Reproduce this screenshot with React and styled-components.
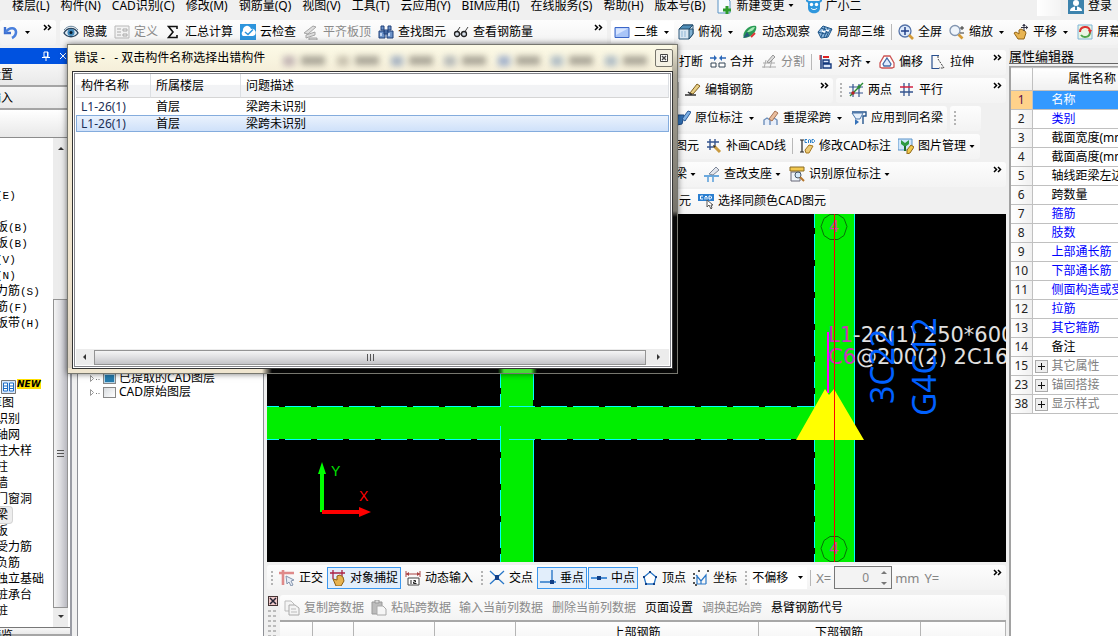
import React from "react";
import styled, { createGlobalStyle, css } from "styled-components";

const Global = createGlobalStyle`
  * { box-sizing: border-box; }
  html, body, #root { height: 100%; margin: 0; }
  body {
    overflow: hidden;
    background: #f0f0f0;
    color: #000;
    font: 12px/16px "Noto Sans", "Noto Sans CJK SC", sans-serif;
  }
  button, input, select { font: inherit; color: inherit; margin: 0; }
`;

/* ---------- icons ---------- */

const svgs = {
  undo: <><path d="M2 3v6h6" fill="none" stroke="#3d6fd0" strokeWidth="2.4" /><path d="M2.500 8.500C6 3 13 3 13 8c0 3-2 5-4 6" fill="none" stroke="#4a80dd" strokeWidth="2.600" /></>,
  eye: <><path d="M1 9c3-6 11-6 14 0-3 5-11 5-14 0z" fill="#dfe9f2" stroke="#2b4660" strokeWidth="1.4" /><circle cx="8" cy="8.500" r="3.500" fill="#3f86b8" /><circle cx="8" cy="8.500" r="1.500" fill="#0a1a28" /><path d="M1 6c4-5 10-5 14 0" fill="none" stroke="#68859c" /></>,
  form: <><path d="M1 2h14v12H1z" fill="#f2f2f2" stroke="#b8b8b8" /><path d="M3 5h4M3 8h4M3 11h4M9 5h4v2H9zM9 10h4v2H9z" fill="none" stroke="#aaa" /></>,
  sigma: <path d="M12 5V2.500H3.500L8 8l-4.500 5.500H12V11" fill="none" stroke="#111" strokeWidth="1.600" />,
  cloud: <><path d="M0 0h16v16H0z" fill="#2d95dd" /><path d="M3 12a3 3 0 0 1 0-5 4 4 0 0 1 8-2 3.500 3.500 0 0 1 2 7z" fill="#fff" /><path d="M5 8l3 2.500 5-5" fill="none" stroke="#2d95dd" strokeWidth="1.500" /></>,
  slab: <><path d="M1 9l9-7 3 1-8 7zM3 11l9-3v3l-9 3zM6 14h8v2H6z" fill="#ddd" stroke="#a5a5a5" /></>,
  find: <><path d="M3 2h3v4H3zM10 2h3v4h-3zM1 7h6v7H1zM9 7h6v7H9zM6 6h4v4H6z" fill="#6d93c9" stroke="#1f3f78" /><path d="M3 9v3M11 9v3" stroke="#dceaff" strokeWidth="1.500" /></>,
  glasses: <><path d="M3 9l4-6M11 9l4-6" stroke="#444" fill="none" /><circle cx="4" cy="10" r="2.500" fill="#d8e0ea" stroke="#222" strokeWidth="1.300" /><circle cx="11" cy="10" r="2.500" fill="#d8e0ea" stroke="#222" strokeWidth="1.300" /><path d="M6 10h3" stroke="#222" /></>,
  plane: <><path d="M1 3.500h14v10H1z" fill="#a9c5f8" stroke="#3b66c8" /><path d="M2 4.500h12L2 11z" fill="#d7e5ff" /></>,
  cube: <><path d="M1 5l4-4h10v9l-4 5H1z" fill="#d8e6f2" stroke="#2b567a" /><path d="M1 5l4-4h10l-4 4z" fill="#4f8db7" stroke="#234a68" /><path d="M11 5h4v5l-4 5z" fill="#7fb0d2" stroke="#234a68" /><path d="M4 7v6M7 7v6" stroke="#8fb5d5" /></>,
  orbit: <><path d="M2 14C-1 8 8 0 14 2c2 5-5 12-12 12z" fill="#2a9b55" /><path d="M5 8c2-3 5-5 8-5-1 3-4 5-8 5z" fill="#a5e8b5" /><path d="M1 14l4-6 3 4z" fill="#27597c" /><path d="M9 13l4-4" stroke="#d33" strokeWidth="2" /></>,
  cube3: <><path d="M1 8l5-6 9 3-4 8-7 1z" fill="#8db8df" stroke="#1e5588" /><path d="M1 8l7 2 7-5M4 4l8 3-3 7M8 3L4 13M11 4L7 13" fill="none" stroke="#1e5588" /><path d="M5 7l3 1M9 6l3 1" stroke="#fff" strokeWidth="1.500" /></>,
  full: <><circle cx="7" cy="7" r="6" fill="#dce9fb" stroke="#5573a8" strokeWidth="1.300" /><path d="M7 3v8M3 7h8" stroke="#22408a" strokeWidth="1.500" /><path d="M11 11l4 4" stroke="#d49a35" strokeWidth="2.600" /></>,
  zoom: <><circle cx="6" cy="6.500" r="5" fill="#eef4fb" stroke="#8295b0" strokeWidth="1.300" /><path d="M9.500 10.500l4 4" stroke="#d49a35" strokeWidth="2.600" /><path d="M11 4h4M13 2v4M11 9h4" stroke="#333" /></>,
  hand: <><path d="M1 9l2-1 3 2V6l2-1 2 1 2 1 1 2-2 6H5z" fill="#e8b451" stroke="#946515" /><path d="M11 0v7M8 3.500h7" stroke="#334" /><path d="M11 0l-2 2h4zM15 3.500l-2-2v4z" fill="#334" /></>,
  screen: <><path d="M1 1h14v14H1z" fill="#e9f5e4" stroke="#7eb5d8" /><path d="M3 8c0-6 9-7 10-1" fill="none" stroke="#dc3333" strokeWidth="2" /><path d="M13 8c0 6-7 6-9 3" fill="none" stroke="#4da44a" strokeWidth="2" /><path d="M11 6h4l-2 4z" fill="#dc3333" /></>,
  docAdd: <><path d="M1 0h9l3 3v12H1z" fill="#f6fbff" stroke="#5b93c4" /><path d="M10 8v8M6 12h8" stroke="#2c9b2c" strokeWidth="3" /></>,
  robot: <><path d="M2 3l12 0v7c0 7-12 7-12 0z" fill="#2f97dd" /><path d="M0 2l4 3M16 2l-4 3" stroke="#2f97dd" strokeWidth="2" /><circle cx="5.500" cy="6.500" r="1.700" fill="#fff" /><circle cx="10.500" cy="6.500" r="1.700" fill="#fff" /><path d="M5 10c1 2 5 2 6 0" fill="none" stroke="#fff" /></>,
  user: <><path d="M0 0h16v16H0z" fill="#3d83ad" /><circle cx="8" cy="5" r="3" fill="#fff" /><path d="M2 13c0-6 12-6 12 0z" fill="#fff" /><path d="M8 8v4" stroke="#3d83ad" strokeWidth="2" /></>,
  merge: <><path d="M0 4h5M16 4h-5" stroke="#2b67b8" strokeWidth="1.500" /><path d="M4 1l3 3-3 3zM12 1L9 4l3 3z" fill="#2b67b8" /><path d="M1 9h5v4H1zM9 9h6v4H9z" fill="#fff" stroke="#345" /></>,
  split: <><path d="M1 13h14M2 9h12M5 6l-2 8M11 6l-2 8" stroke="#aaa" fill="none" /><path d="M6 8l6-7 2 2-6 6z" fill="#ddd" stroke="#999" /></>,
  align: <><path d="M3 1v14" stroke="#14387c" strokeWidth="1.500" /><path d="M2 1v5" stroke="#d22" /><path d="M5 3h6" stroke="#d22" strokeWidth="2" /><path d="M5 6h6v3H5zM5 10h8v4H5z" fill="#dbe6fa" stroke="#14387c" strokeWidth="1.400" /></>,
  offset: <><path d="M5 2h6l4 7v4l-2 1H3l-2-1V9z" fill="#fff" stroke="#c55" strokeWidth="1.300" /><path d="M8 4l4 6-1 2H5l-1-2z" fill="#e1edff" stroke="#456ca7" strokeWidth="1.300" /></>,
  stretch: <><path d="M9 1.500H2v13h7" fill="none" stroke="#294f8e" strokeWidth="1.200" /><path d="M8 2v3l6 9H9" fill="none" stroke="#444" strokeDasharray="2 1" /></>,
  pencil: <><path d="M5 11l7-9 3 2-7 8z" fill="#e8cf86" stroke="#806020" /><path d="M0 13h11M3 10l4 3" stroke="#333" strokeWidth="1.500" /></>,
  twoPoint: <><path d="M5 2v13M11 2v13M1 5h14M1 11h14" stroke="#34548f" strokeWidth="1.200" /><path d="M2 14L15 1" stroke="#2b8b35" strokeWidth="1.500" /><circle cx="5" cy="11" r="1.700" fill="#b22" /><circle cx="11" cy="5" r="1.700" fill="#2b8b35" /></>,
  parallel: <><path d="M5 1v13M10 1v13" stroke="#34548f" strokeWidth="1.300" /><path d="M1 5h13" stroke="#d02040" strokeWidth="1.300" /><path d="M1 10h13" stroke="#34548f" strokeWidth="1.300" /></>,
  mark: <><path d="M3 5h6l-2 9-5 1z" fill="#3474b9" stroke="#1d4a85" /><path d="M7 9l6-8 3 1-6 9z" fill="#7fb2e6" stroke="#2b5b97" /></>,
  respan: <><path d="M1 15v-5l3-2 3 2v5M7 15v-5l4-2 3 2v5" fill="#e8effa" stroke="#6d8fba" strokeWidth="1.400" /><path d="M6 9l6-8 3 2-6 8z" fill="#e9bd9d" stroke="#a57355" /></>,
  funnel: <><path d="M1 2h14v4h-3v8" fill="none" stroke="#26568e" strokeWidth="1.400" /><path d="M1 3l4 6h4l3-6z" fill="#e6f0fb" stroke="#4a76aa" /><path d="M4 9v6l4-3z" fill="#3572b9" /></>,
  drawCad: <><path d="M4 1v11M9 1v8M1 4h12M1 9h8" stroke="#34548f" strokeWidth="1.400" /><path d="M8 8l6 6" stroke="#c99a40" strokeWidth="3" /><path d="M7 7l3 1-2 2z" fill="#333" /></>,
  modCad: <><path d="M1 2h4M3 2v12M1 14h4" stroke="#222" strokeWidth="1.200" /><path d="M8 1.500H6v3h2M9.500 5V2l1-.5 1 .5v3M13 1.500h1.500l1 1v1l-1 1H13z" fill="none" stroke="#2b7fc8" /><path d="M6 12l4-5 4 1-4 7H7z" fill="#eccb78" stroke="#a5771f" /></>,
  picture: <><path d="M0 1h14v11H0z" fill="#cfe6fb" stroke="#5a92c8" /><path d="M3 2v4l4 3 4-3V2L7 5z" fill="#2d9a42" /><path d="M6 8h2v5H6z" fill="#1f6e30" /><path d="M9 12l4-5 3 2-4 6-3 1z" fill="#f1c94c" stroke="#926919" /></>,
  support: <><path d="M0 10h15M4 11v5M9 11v5" stroke="#3d8fd5" strokeWidth="1.300" /><path d="M5 8l7-7 3 3-6 5z" fill="#e2e5ec" stroke="#7d8799" /></>,
  identify: <><path d="M2 6h9v9H2z" fill="#eef3f9" stroke="#667" /><path d="M1 1h14v4H1z" fill="#f2c84f" stroke="#8a6b22" /><circle cx="9" cy="9" r="3" fill="#d5e9fb" stroke="#456" /><path d="M11 11l4 4" stroke="#b5762c" strokeWidth="2" /></>,
  selCad: <><path d="M0 1h16v7H0z" fill="#2b7fd0" /><path d="M5 3H2.500v3H5M7 6.500V4l1-1 1 1v2.500M11 3h1.500l1 1v1l-1 1H11z" fill="none" stroke="#fff" /><path d="M9 7v7l2-2 2 4 1-1-1-3h2z" fill="#fff" stroke="#555" /></>,
  ortho: <><path d="M0 3h15M4 0v15" stroke="#df8a8a" strokeWidth="2.600" /><path d="M7 6l8 4-3 1 2 4-2 1-2-4-2 2z" fill="#e8edf5" stroke="#8494ad" /></>,
  snap: <><path d="M0 3h15M3 0v9M12 0v6" stroke="#a24" strokeWidth="1.300" /><path d="M3 9l4 1V6l3-1 3 2 1 4-3 5H6z" fill="#e7b350" stroke="#8c5d10" /></>,
  dynamic: <><path d="M1 1v6M15 1v6M1 4h14" stroke="#a44" /><path d="M1 4l3-2v4zM15 4l-3-2v4z" fill="#a44" /><path d="M3 8h11v7H3z" fill="#fff" stroke="#444" /><path d="M6 10v4M8.500 10.500h2v1.500h-2v1.500h3" fill="none" stroke="#222" /></>,
  cross: <><path d="M1 1l14 13M15 1L1 14" stroke="#2b78c8" strokeWidth="1.300" /><path d="M6 5h4v5H6z" fill="#123f85" /></>,
  perp: <><path d="M0 12h16M12 0v12" stroke="#2b78c8" strokeWidth="1.400" /><path d="M10 10h4v4h-4z" fill="#123f85" /></>,
  mid: <><path d="M0 8h16" stroke="#4b90d8" strokeWidth="1.800" /><path d="M6 6h4v4H6z" fill="#123f85" /></>,
  vertex: <><path d="M8 2l6 5-2 7H4L2 7z" fill="#fff" stroke="#2b78c8" strokeWidth="1.300" /><path d="M7 1h2v2H7zM1 6h2v2H1zM13 6h2v2h-2zM3 13h2v2H3zM11 13h2v2h-2z" fill="#123f85" /></>,
  coord: <><path d="M4 5v9h9M3 5l5 6 5-6v9M8 11v3" fill="none" stroke="#2b78c8" strokeWidth="1.200" /><path d="M0 3h2v2H0zM5 0h2v2H5zM14 0h2v2h-2zM0 12h2v2H0zM2 14h2v2H2zM0 7h2v2H0z" fill="#555" /></>,
  copy: <><path d="M1 1h6l3 3v7H1z" fill="#f4f4f4" stroke="#bbb" /><path d="M5 5h6l4 3v7H5z" fill="#f4f4f4" stroke="#aaa" /><path d="M7 9h5M7 12h6" stroke="#bbb" /></>,
  paste: <><path d="M1 2h10v12H1z" fill="#bcbcbc" stroke="#999" /><path d="M4 0h4v3H4z" fill="#ddd" stroke="#999" /><path d="M6 6h6l3 3v6H6z" fill="#f6f6f6" stroke="#aaa" /></>,
};

const IconSvg = styled.svg`
  flex: none;
  display: block;
`;
const Icon = ({ name }) => (
  <IconSvg width="16" height="16" viewBox="0 0 16 16" aria-hidden="true">{svgs[name]}</IconSvg>
);

const CaretSvg = styled.svg`
  flex: none;
  width: ${(p) => (p.$tight ? 8 : 9)}px;
  height: 3px;
  margin-left: ${(p) => (p.$tight ? -2 : 0)}px;
`;
const Caret = ({ tight }) => (
  <CaretSvg $tight={tight} viewBox="0 0 5 3" aria-hidden="true"><path d="M0 0h5L2.500 3z" fill="#000" /></CaretSvg>
);

const MoreButton = styled.button`
  align-self: flex-start;
  margin-left: auto;
  padding: 4px 4px 0 0;
  border: 0;
  background: none;
  line-height: 0;
`;
const More = () => (
  <MoreButton aria-label="更多">
    <svg width="9" height="7" viewBox="0 0 9 7"><path d="M1 1l2.500 2.500L1 6M5 1l2.500 2.500L5 6" fill="none" stroke="#000" strokeWidth="1.500" /></svg>
  </MoreButton>
);

/* ---------- toolbar parts ---------- */

const Segment = styled.div`
  display: flex;
  align-items: center;
  gap: 1px;
  height: 25px;
  min-width: 0;
  flex: ${(p) => (p.$grow ? "1 1 0" : "none")};
  width: ${(p) => (p.$width ? `${p.$width}px` : "auto")};
  padding-left: ${(p) => p.$lead || 0}px;
  padding-right: ${(p) => (p.$grow || p.$width ? 0 : 1)}px;
  overflow: hidden;
  border-radius: 3px;
  background: linear-gradient(#fdfdfd, #f3f3f3);
`;

const ToolButton = styled.button`
  display: flex;
  align-items: center;
  flex: none;
  gap: 4px;
  height: 22px;
  padding: 0 ${(p) => (p.$wide ? 3 : 2)}px;
  border: 1px solid ${(p) => (p.$pressed ? "#3b97ee" : "transparent")};
  background: ${(p) => (p.$pressed ? "#e2eefb" : p.$lit ? "#fff" : "transparent")};
  color: ${(p) => (p.disabled ? "#8a8a8a" : "#000")};
  white-space: nowrap;
`;
const Tool = ({ icon, caret, tight, children, ...rest }) => (
  <ToolButton {...rest}>
    {icon && <Icon name={icon} />}
    {children}
    {caret && <Caret tight={tight} />}
  </ToolButton>
);

const Divider = styled.span`
  flex: none;
  width: 1px;
  height: 16px;
  margin: 0 2px;
  background: #b8b8b8;
`;
const Grip = styled.span`
  flex: none;
  width: 2px;
  height: 14px;
  margin: 0 2px 0 4px;
  background: repeating-linear-gradient(#b4b4b4 0 2px, transparent 2px 4px);
`;

/* ---------- page frame ---------- */

const Page = styled.div`
  position: relative;
  display: flex;
  flex-direction: column;
  height: 100vh;
  overflow: hidden;
`;
const MenuBar = styled.nav`
  display: flex;
  align-items: flex-start;
  flex: none;
  gap: 11px;
  height: 19px;
  padding-left: 12px;
  overflow: hidden;
`;
const MenuButton = styled.button`
  display: flex;
  align-items: center;
  flex: none;
  gap: 4px;
  height: 11px;
  padding: 0;
  border: 0;
  background: none;
  line-height: 10px;
  white-space: nowrap;
`;
const LoginArea = styled.div`
  display: flex;
  gap: 7px;
  margin-left: auto;
  padding-right: 6px;
`;
const LoginBlank = styled.span`
  width: 24px;
  height: 16px;
  background: linear-gradient(90deg, #fff, #f3f3f3);
`;
const MainToolbar = styled.div`
  display: flex;
  flex: none;
  align-items: center;
  gap: 4px;
  height: 26px;
  margin-bottom: 3px;
`;
const Body = styled.div`
  display: flex;
  flex: 1;
  min-height: 0;
`;

/* ---------- left navigation ---------- */

const Side = styled.aside`
  display: flex;
  flex-direction: column;
  flex: none;
  width: 72px;
  overflow: hidden;
  border-right: 2px solid #9a9ca4;
`;
const SideTitle = styled.div`
  display: flex;
  align-items: center;
  justify-content: flex-end;
  gap: 9px;
  flex: none;
  height: 16px;
  padding-right: 3px;
  background: #0052e0;
`;
const SideButton = styled.button`
  flex: none;
  height: ${(p) => p.$height || 23}px;
  padding: 0;
  border: 0;
  border-bottom: 2px solid #a5a5a5;
  background: linear-gradient(#f6f6f6, #e9e9e9);
  text-align: left;
  text-indent: -11px;
  white-space: nowrap;
`;
const SideBand = styled.div`
  flex: none;
  height: 28px;
  border-bottom: 1px solid #8c8c8c;
  background: linear-gradient(#fff, #e8e8e8);
`;
const SideBody = styled.div`
  display: flex;
  flex: 1;
  min-height: 0;
  background: #fff;
  border-bottom: 1px solid #777;
`;
const NavList = styled.ul`
  flex: 1;
  min-width: 0;
  margin: 0;
  padding: 33px 0 0;
  overflow: hidden;
  list-style: none;
`;
const NavItem = styled.li`
  height: 16px;
  text-indent: ${(p) => (p.$root ? -10 : -4)}px;
  white-space: nowrap;
`;
const NavLabel = styled.span`
  display: inline-block;
  height: 16px;
  padding-right: 4px;
  text-indent: 0;
  ${(p) => p.$selected && css`
    border-radius: 0 3px 3px 0;
    background: #ededed;
    box-shadow: 0 0 0 1px #d4d4d4;
  `}
`;
const KeyHint = styled.span`
  font: 11px/16px "Liberation Mono", monospace;
`;
const NewItem = styled.li`
  display: flex;
  height: 16px;
`;
const NewBadge = styled.b`
  height: 10px;
  background: #ffe000;
  font: italic bold 9px/10px "DejaVu Sans", sans-serif;
`;

const VScroll = styled.div`
  display: flex;
  flex-direction: column;
  align-items: center;
  flex: none;
  width: 15px;
  margin-right: 2px;
  padding: 6px 0;
  background: #ececec;
`;
const VSpace = styled.span`
  flex: ${(p) => p.$share};
`;
const VThumb = styled.span`
  display: flex;
  align-items: center;
  justify-content: center;
  flex: 308;
  width: 15px;
  border: 1px solid #939393;
  background: linear-gradient(90deg, #f4f4f4, #dcdce0 50%, #b9b9c0);
`;
const Arrow = ({ dir }) => {
  const d = { up: "M1 6l3-3 3 3z", down: "M1 2l3 3 3-3z", left: "M6 1L3 4l3 3z", right: "M2 1l3 3-3 3z" }[dir];
  return <svg width="8" height="8" viewBox="0 0 8 8" aria-hidden="true"><path d={d} fill="#333" /></svg>;
};

/* ---------- layer tree ---------- */

const TreePanel = styled.section`
  flex: none;
  width: 187px;
  margin: 0 3px 0 5px;
  padding: 323px 0 0 11px;
  border: solid #8e9096;
  border-width: 0 1px;
  background: #fff;
`;
const TreeRow = styled.label`
  display: flex;
  align-items: center;
  gap: 3px;
  height: 14px;
  line-height: 14px;
  white-space: nowrap;
`;
const TreeCheck = styled.input`
  appearance: none;
  width: 13px;
  height: 11px;
  margin: 0;
  border: 1px solid #888;
  background: linear-gradient(135deg, #d8dce0, #fff);
  &:checked { background: #267cae; box-shadow: inset 0 0 0 1px #b4d5e8; }
`;

/* ---------- centre ---------- */

const Centre = styled.main`
  display: flex;
  flex-direction: column;
  flex: 1;
  min-width: 0;
`;
const Strips = styled.div`
  display: grid;
  grid-template-rows: repeat(5, 28px) 26px;
  align-items: center;
  flex: none;
`;
const Strip = styled.div`
  display: flex;
  gap: 3px;
  min-width: 0;
`;
const Canvas = styled.div`
  flex: 1;
  min-height: 0;
  overflow: hidden;
  background: #000;
  svg { display: block; }
`;
const SnapBar = styled.div`
  display: flex;
  align-items: center;
  flex: none;
  height: 31px;
`;
const OffsetBox = styled.span`
  display: flex;
  align-items: center;
  flex: none;
  width: 57px;
  height: 22px;
  padding: 0 2px;
  background: #fff;
`;
const OffsetSelect = styled.select`
  appearance: none;
  flex: 1;
  min-width: 0;
  padding: 0;
  border: 0;
  background: transparent;
`;
const AxisLabel = styled.label`
  flex: none;
  margin: 0 2px;
  color: #858585;
  font-size: 13px;
`;
const NumberBox = styled.span`
  display: flex;
  align-items: center;
  flex: none;
  width: 58px;
  height: 23px;
  padding-right: 4px;
  border: 1px solid #777;
  background: #f3f3f3;
`;
const NumberInput = styled.input`
  flex: 1;
  min-width: 0;
  padding: 0 12px 0 0;
  border: 0;
  background: none;
  color: #858585;
  text-align: right;
`;
const Spin = styled.span`
  display: flex;
  flex-direction: column;
  gap: 8px;
`;

const SpanPanel = styled.section`
  display: flex;
  flex: none;
  height: 43px;
  overflow: hidden;
`;
const SpanGrip = styled.div`
  display: flex;
  flex-direction: column;
  gap: 4px;
  flex: none;
  width: 13px;
  padding: 3px 2px 0 1px;
`;
const CloseTiny = styled.button`
  width: 10px;
  height: 10px;
  padding: 0;
  border: 1px solid #433;
  background: #efc9c9;
  line-height: 0;
`;
const DotField = styled.span`
  flex: 1;
  width: 8px;
  background:
    linear-gradient(90deg, transparent 3px, #f0f0f0 3px 5px, transparent 5px),
    repeating-linear-gradient(#bbb 0 2px, transparent 2px 5px);
`;
const SpanMain = styled.div`
  flex: 1;
  min-width: 0;
  padding-top: 2px;
`;
const SpanTable = styled.table`
  width: 100%;
  table-layout: fixed;
  border-collapse: collapse;
  border-top: 2px solid #a8a8a8;
  background: linear-gradient(#fff, #f4f4f4);
  th {
    height: 22px;
    padding: 0;
    border-right: 1px solid #b5b5b5;
    font-weight: normal;
  }
`;

/* ---------- properties ---------- */

const Props = styled.aside`
  flex: none;
  width: 109px;
  margin-left: 3px;
  overflow: hidden;
`;
const PropsTitle = styled.h2`
  height: 16px;
  margin: 0 0 2px;
  border-bottom: 1px solid #666;
  background: #ececec;
  font-size: 13px;
  font-weight: normal;
  line-height: 16px;
  white-space: nowrap;
`;
const PropsBody = styled.div`
  height: 100%;
  border: solid #a2a2a2;
  border-width: 1px 0 0 2px;
  background: #fff;
`;
const PropTable = styled.table`
  width: 141px;
  table-layout: fixed;
  border-collapse: collapse;
  line-height: 16px;
  th, td {
    height: 19px;
    padding: 0;
    border: 1px solid #c0c0c0;
    border-left: 0;
    font-weight: normal;
    white-space: nowrap;
  }
  thead th { height: 23px; background: linear-gradient(#fff, #f0f0f0); }
`;
const PropNumber = styled.th`
  background: ${(p) => (p.$active ? "#ffd28a" : "linear-gradient(90deg, #fff, #f0f0f0)")};
  color: ${(p) => (p.$active ? "#5a0f4a" : "#222")};
`;
const PropName = styled.td`
  background: ${(p) => (p.$active ? "#3399ff" : "#fff")};
  color: ${(p) => p.$color};
`;
const PropCell = styled.div`
  display: grid;
  grid-template-columns: 15px auto;
  align-items: center;
  height: 16px;
  padding-left: 2px;
  column-gap: 2px;
`;
const ExpandSlot = styled.span`
  display: flex;
`;
const Expander = styled.button`
  width: 13px;
  height: 13px;
  padding: 0;
  border: 1px solid #aaa;
  background: #eee;
  line-height: 0;
`;

/* ---------- error dialog ---------- */

const Dialog = styled.section`
  position: absolute;
  left: 67px;
  top: 44px;
  display: flex;
  flex-direction: column;
  width: 611px;
  height: 330px;
  padding: 0 4px 4px;
  border: 1px solid #77776f;
  box-shadow: 0 0 6px rgba(0, 0, 0, 0.55);
  background:
    linear-gradient(#f5f0da 0, #aaa596 30px, #77746c 166px, #080808 172px) right top / 5px 100% no-repeat,
    linear-gradient(90deg, #efe5cf 0 194px, #050505 204px 430px, #44dd33 436px 463px, #050505 469px) left bottom / 100% 5px no-repeat,
    linear-gradient(#fcfae6, #f4edd7 30px, #efe3cc 70%, #d8d0c4);
`;
const DialogTitle = styled.header`
  display: flex;
  align-items: center;
  flex: none;
  height: 26px;
  padding: 0 0 0 2px;
`;
const DialogName = styled.h1`
  flex: none;
  margin: 0;
  font-size: 12px;
  font-weight: normal;
  white-space: pre;
`;
const Ghosts = styled.span`
  display: flex;
  justify-content: space-between;
  flex: 1;
  margin: 6px 8px 0 18px;
`;
const Ghost = styled.span`
  display: flex;
  gap: 6px;
  filter: blur(3px);
  opacity: 0.6;
  &::before { content: ""; width: 12px; height: 10px; background: ${(p) => p.$tone}; }
  &::after { content: ""; width: 24px; height: 9px; background: #77736a; }
`;
const DialogClose = styled.button`
  flex: none;
  width: 18px;
  height: 18px;
  padding: 0;
  border: 1px solid #77756c;
  border-radius: 2px;
  background: #f4f1e4;
  line-height: 0;
`;
const Client = styled.div`
  display: flex;
  flex-direction: column;
  flex: 1;
  min-height: 0;
  padding: 1px;
  border: 1px solid #333;
  background: #fff;
`;
const ClientInner = styled.div`
  display: flex;
  flex-direction: column;
  flex: 1;
  min-height: 0;
  padding: 0 1px 1px;
  border: 1px solid #85868c;
`;
const ErrorTable = styled.table`
  width: 100%;
  table-layout: fixed;
  border-collapse: separate;
  border-spacing: 0;
  th, td { padding: 0 0 0 5px; text-align: left; font-weight: normal; white-space: nowrap; }
  th {
    height: 24px;
    border-right: 1px solid #dcdfe3;
    border-bottom: 1px solid #d5d5d5;
    background: linear-gradient(#fff 45%, #f2f3f5 50%);
  }
`;
const ErrorRow = styled.tr`
  td { height: 17px; line-height: 15px; border: solid transparent; border-width: 1px 0; }
  ${(p) => p.$selected && css`
    td { border-color: #84acdd; background: linear-gradient(#eaf2fd, #cfe1fa); }
    td:first-child { box-shadow: inset 1px 0 #84acdd; }
    td:last-child { box-shadow: inset -1px 0 #84acdd; }
  `}
`;
const Code = styled.td`
  color: #1b2f57;
`;
const HScroll = styled.div`
  display: flex;
  align-items: center;
  justify-content: space-between;
  height: 16px;
  margin-top: auto;
  padding: 0 6px 0 4px;
  background: #ececec;
`;
const HThumb = styled.span`
  display: flex;
  align-items: center;
  justify-content: center;
  flex: 1;
  height: 15px;
  margin: 0 9px 0 6px;
  border: 1px solid #949494;
  background: linear-gradient(#f5f5f5, #dedee0 50%, #c4c4c8);
`;

/* ---------- data ---------- */

const menus = ["楼层(L)", "构件(N)", "CAD识别(C)", "修改(M)", "钢筋量(Q)", "视图(V)", "工具(T)", "云应用(Y)", "BIM应用(I)", "在线服务(S)", "帮助(H)", "版本号(B)"];

const navTop = [["", ""], ["", "(E)"], ["", ""], ["板", "(B)"], ["板", "(B)"], ["", "(V)"], ["", "(N)"], ["力筋", "(S)"], ["筋", "(F)"], ["板带", "(H)"], ["", ""], ["", ""], ["", ""]];
const navBottom = ["识别", "轴网", "柱大样", "柱", "墙", "门窗洞", "梁", "板", "受力筋", "负筋", "独立基础", "桩承台", "桩"];

const BLUE = "#0000ff";
const GREY = "#808080";
const properties = [
  [1, "名称", "#fff"], [2, "类别", BLUE], [3, "截面宽度(mm)", "#000"], [4, "截面高度(mm)", "#000"],
  [5, "轴线距梁左边", "#000"], [6, "跨数量", "#000"], [7, "箍筋", BLUE], [8, "肢数", BLUE],
  [9, "上部通长筋", BLUE], [10, "下部通长筋", BLUE], [11, "侧面构造或受", BLUE], [12, "拉筋", BLUE],
  [13, "其它箍筋", BLUE], [14, "备注", "#000"], [15, "其它属性", GREY], [23, "锚固搭接", GREY], [38, "显示样式", GREY],
];

const ghostTones = ["#a08c9a", "#a8a090", "#7088b0", "#8a93a0", "#6a86c0", "#8099b5", "#8099b5"];

/* ---------- drawing ---------- */

const Drawing = () => (
  <svg width="739" height="348" viewBox="267 214 739 348">
    <g fill="#00ee00">
      <path d="M501 214h32v348h-32zM815 214h39v348h-39zM267 407h548v32H267z" />
    </g>
    <g stroke="#00ffff" fill="none" strokeDasharray="26 6" shapeRendering="crispEdges">
      <path d="M253 406.500H501M509 406.500H815M253 439.500H501M509 439.500H800" />
      <path d="M500.500 202V406M500.500 426V562M814.500 202V562" />
    </g>
    <path d="M533.500 214v186M533.500 440v122M854.500 214v348" stroke="#00ffff" shapeRendering="crispEdges" />
    <g fill="none" stroke="#087008">
      <path d="M830 214.500h8l6 4 3 8-3 9-6 4h-8l-6-4-3-9 3-8zM830 536.500h8l6 4 3 8-3 9-6 4h-8l-6-4-3-9 3-8z" />
    </g>
    <g fill="#cc44aa" fontFamily="Noto Sans, sans-serif" fontSize="16" textAnchor="middle">
      <text x="834" y="232">4</text>
      <text x="834" y="554">4</text>
    </g>
    <g fontFamily="DejaVu Sans, sans-serif" fontSize="21" fill="#e0e0e0">
      <text x="828" y="342"><tspan fill="#cc33bb">L1</tspan>-26(1) 250*600</text>
      <text x="828" y="364"><tspan fill="#cc33bb">C6</tspan>@200(2) 2C16</text>
    </g>
    <g fontFamily="Noto Sans, sans-serif" fontSize="32" fill="#0060ff">
      <text transform="translate(894 404) rotate(-90)">3C22</text>
      <text transform="translate(936 416) rotate(-90)">G4C12</text>
    </g>
    <path d="M828 332v61" stroke="#ff00ff" strokeWidth="2" />
    <path d="M796 440l29-51 4 6 5-6 30 51z" fill="#ffff00" />
    <path d="M834 214h1v348h-1z" fill="#ff0000" shapeRendering="crispEdges" />
    <path d="M320 512v-38h-2l4-12 4 12h-2v38z" fill="#00ff00" />
    <path d="M322 510h37v-3l12 5-12 5v-3h-37z" fill="#ff0000" />
    <g fontFamily="Liberation Sans, sans-serif" fontSize="14">
      <text x="331" y="476" fill="#00e000">Y</text>
      <text x="359" y="501" fill="#ff0000">X</text>
    </g>
  </svg>
);

/* ---------- app ---------- */

export default function App() {
  return (
    <>
      <Global />
      <Page>
        <MenuBar>
          {menus.map((m) => <MenuButton key={m}>{m}</MenuButton>)}
          <MenuButton><Icon name="docAdd" />新建变更<Caret tight /></MenuButton>
          <MenuButton><Icon name="robot" />广小二</MenuButton>
          <LoginArea>
            <LoginBlank />
            <MenuButton><Icon name="user" />登录</MenuButton>
          </LoginArea>
        </MenuBar>

        <MainToolbar>
          <Segment $width={56}><Tool icon="undo" caret aria-label="撤销" /><More /></Segment>
          <Segment $width={547}>
            <Tool icon="eye">隐藏</Tool>
            <Tool icon="form" disabled>定义</Tool>
            <Tool icon="sigma">汇总计算</Tool>
            <Tool icon="cloud">云检查</Tool>
            <Tool icon="slab" disabled>平齐板顶</Tool>
            <Tool icon="find">查找图元</Tool>
            <Tool icon="glasses">查看钢筋量</Tool>
            <More />
          </Segment>
          <Segment $grow>
            <Tool icon="plane" caret $lit>二维</Tool>
            <Tool icon="cube" caret>俯视</Tool>
            <Tool icon="orbit">动态观察</Tool>
            <Tool icon="cube3">局部三维</Tool>
            <Divider />
            <Tool icon="full">全屏</Tool>
            <Tool icon="zoom" caret>缩放</Tool>
            <Tool icon="hand" caret>平移</Tool>
            <Tool icon="screen">屏幕</Tool>
          </Segment>
        </MainToolbar>

        <Body>
          <Side>
            <SideTitle>
              <svg width="8" height="10" viewBox="0 0 8 10" aria-hidden="true"><path d="M2 1h4v5H2zM0 6.500h8M4 7v3M5.500 1v5" fill="none" stroke="#fff" /></svg>
              <svg width="8" height="8" viewBox="0 0 8 8" aria-hidden="true"><path d="M1 1l6 6M7 1L1 7" stroke="#fff" /></svg>
            </SideTitle>
            <SideButton>设置</SideButton>
            <SideButton>输入</SideButton>
            <SideBand />
            <SideBody>
              <NavList>
                {navTop.map(([name, key], i) => (
                  <NavItem key={i}>{name}<KeyHint>{key}</KeyHint></NavItem>
                ))}
                <NewItem>
                  <svg width="17" height="16" viewBox="0 0 17 16" aria-hidden="true"><path d="M1.500 1.500h14v13h-14z" fill="#d7e9ff" stroke="#777" /><path d="M3.500 4h4v8h-4zM9.500 4h4v8h-4zM3 7h5M9 7h5M3 9.500h5M9 9.500h5" fill="#fff" stroke="#1d6cc5" /></svg>
                  <NewBadge>NEW</NewBadge>
                </NewItem>
                <NavItem $root>草图</NavItem>
                {navBottom.map((name) => (
                  <NavItem key={name}><NavLabel $selected={name === "梁"}>{name}</NavLabel></NavItem>
                ))}
              </NavList>
              <VScroll>
                <Arrow dir="up" />
                <VSpace $share={148} />
                <VThumb>
                  <svg width="7" height="9" viewBox="0 0 7 9" aria-hidden="true"><path d="M0 1.500h7M0 4.500h7M0 7.500h7" stroke="#555" /></svg>
                </VThumb>
                <VSpace $share={5} />
                <Arrow dir="down" />
              </VScroll>
            </SideBody>
            <SideButton $height={8}>预览</SideButton>
          </Side>

          <TreePanel>
            {[["已提取的CAD图层", true], ["CAD原始图层", false]].map(([name, on]) => (
              <TreeRow key={name}>
                <svg width="11" height="9" viewBox="0 0 11 9" aria-hidden="true"><path d="M1.500 1.500l3 3-3 3z" fill="#fff" stroke="#999" /><path d="M7 5.500h1M9.500 5.500h1" stroke="#777" /></svg>
                <TreeCheck type="checkbox" defaultChecked={on} />
                {name}
              </TreeRow>
            ))}
          </TreePanel>

          <Centre>
            <Strips>
              <Strip>
                <Segment $grow $lead={409}>
                  <Tool>打断</Tool>
                  <Tool icon="merge">合并</Tool>
                  <Tool icon="split" disabled>分割</Tool>
                  <Divider />
                  <Tool icon="align" caret tight>对齐</Tool>
                  <Tool icon="offset">偏移</Tool>
                  <Tool icon="stretch">拉伸</Tool>
                  <More />
                </Segment>
              </Strip>
              <Strip>
                <Segment $grow $lead={409}>
                  <Divider />
                  <Tool icon="pencil">编辑钢筋</Tool>
                  <More />
                </Segment>
                <Segment $width={170}>
                  <Grip />
                  <Tool icon="twoPoint">两点</Tool>
                  <Tool icon="parallel">平行</Tool>
                  <More />
                </Segment>
              </Strip>
              <Strip>
                <Segment $lead={405}>
                  <Tool icon="mark" caret>原位标注</Tool>
                  <Tool icon="respan" caret>重提梁跨</Tool>
                  <Tool icon="funnel">应用到同名梁</Tool>
                </Segment>
                <Segment $width={31}><Grip /></Segment>
              </Strip>
              <Strip>
                <Segment $lead={405}>
                  <Tool>图元</Tool>
                  <Tool icon="drawCad">补画CAD线</Tool>
                  <Divider />
                  <Tool icon="modCad">修改CAD标注</Tool>
                  <Tool icon="picture" caret tight>图片管理</Tool>
                </Segment>
              </Strip>
              <Strip>
                <Segment $grow $lead={405}>
                  <Tool caret tight>梁</Tool>
                  <Tool icon="support" caret tight>查改支座</Tool>
                  <Tool icon="identify" caret tight>识别原位标注</Tool>
                  <More />
                </Segment>
              </Strip>
              <Strip>
                <Segment $lead={409}>
                  <Tool>元</Tool>
                  <Tool icon="selCad">选择同颜色CAD图元</Tool>
                </Segment>
              </Strip>
            </Strips>

            <Canvas><Drawing /></Canvas>

            <SnapBar>
              <Segment $grow>
                <Grip />
                <Tool icon="ortho">正交</Tool>
                <Tool icon="snap" $pressed>对象捕捉</Tool>
                <Tool icon="dynamic">动态输入</Tool>
                <Grip />
                <Tool icon="cross">交点</Tool>
                <Tool icon="perp" $pressed>垂点</Tool>
                <Tool icon="mid" $pressed>中点</Tool>
                <Tool icon="vertex">顶点</Tool>
                <Tool icon="coord">坐标</Tool>
                <Grip />
                <OffsetBox>
                  <OffsetSelect aria-label="偏移方式" defaultValue="不偏移"><option>不偏移</option></OffsetSelect>
                  <Caret />
                </OffsetBox>
                <Divider />
                <AxisLabel htmlFor="dx">X=</AxisLabel>
                <NumberBox>
                  <NumberInput id="dx" defaultValue="0" />
                  <Spin>
                    <svg width="6" height="3" viewBox="0 0 6 3"><path d="M0 3l3-3 3 3z" fill="#777" /></svg>
                    <svg width="6" height="3" viewBox="0 0 6 3"><path d="M0 0l3 3 3-3z" fill="#777" /></svg>
                  </Spin>
                </NumberBox>
                <AxisLabel as="span">mm</AxisLabel>
                <AxisLabel as="span">Y=</AxisLabel>
                <More />
              </Segment>
            </SnapBar>

            <SpanPanel>
              <SpanGrip>
                <CloseTiny aria-label="关闭">
                  <svg width="8" height="8" viewBox="0 0 8 8"><path d="M1 1l6 6M7 1L1 7" stroke="#223" strokeWidth="1.500" /></svg>
                </CloseTiny>
                <DotField />
              </SpanGrip>
              <SpanMain>
                <Segment $lead={1}>
                  <Tool icon="copy" disabled>复制跨数据</Tool>
                  <Tool icon="paste" disabled>粘贴跨数据</Tool>
                  <Tool $wide disabled>输入当前列数据</Tool>
                  <Tool $wide disabled>删除当前列数据</Tool>
                  <Tool $wide>页面设置</Tool>
                  <Tool $wide disabled>调换起始跨</Tool>
                  <Tool $wide>悬臂钢筋代号</Tool>
                </Segment>
                <SpanTable>
                  <colgroup>
                    {[32, 41, 81, 81, 243, 162].map((w, i) => <col key={i} width={w} />)}
                    <col />
                  </colgroup>
                  <thead>
                    <tr><th /><th /><th /><th /><th>上部钢筋</th><th>下部钢筋</th><th /></tr>
                  </thead>
                </SpanTable>
              </SpanMain>
            </SpanPanel>
          </Centre>

          <Props>
            <PropsTitle>属性编辑器</PropsTitle>
            <PropsBody>
              <PropTable>
                <colgroup><col width="21" /><col width="120" /></colgroup>
                <thead><tr><th /><th>属性名称</th></tr></thead>
                <tbody>
                  {properties.map(([n, name, color]) => (
                    <tr key={n}>
                      <PropNumber $active={n === 1}>{n}</PropNumber>
                      <PropName $active={n === 1} $color={color}>
                        <PropCell>
                          <ExpandSlot>
                            {color === GREY && (
                              <Expander aria-label="展开">
                                <svg width="11" height="11" viewBox="0 0 11 11"><path d="M5.500 2v7M2 5.500h7" stroke="#111" /></svg>
                              </Expander>
                            )}
                          </ExpandSlot>
                          {name}
                        </PropCell>
                      </PropName>
                    </tr>
                  ))}
                </tbody>
              </PropTable>
            </PropsBody>
          </Props>
        </Body>

        <Dialog role="dialog" aria-labelledby="dialog-title">
          <DialogTitle>
            <DialogName id="dialog-title">{"错误 -   - 双击构件名称选择出错构件"}</DialogName>
            <Ghosts>{ghostTones.map((t, i) => <Ghost key={i} $tone={t} />)}</Ghosts>
            <DialogClose aria-label="关闭">
              <svg width="16" height="16" viewBox="0 0 16 16"><path d="M4.500 4.500h7v7h-7z" fill="#fff" stroke="#444" /><path d="M6 6l4 4M10 6l-4 4" stroke="#444" strokeWidth="1.400" /></svg>
            </DialogClose>
          </DialogTitle>
          <Client>
            <ClientInner>
              <ErrorTable>
                <colgroup><col width="75" /><col width="90" /><col /></colgroup>
                <thead><tr><th>构件名称</th><th>所属楼层</th><th>问题描述</th></tr></thead>
                <tbody>
                  <ErrorRow><Code>L1-26(1)</Code><td>首层</td><td>梁跨未识别</td></ErrorRow>
                  <ErrorRow $selected><Code>L1-26(1)</Code><td>首层</td><td>梁跨未识别</td></ErrorRow>
                </tbody>
              </ErrorTable>
              <HScroll>
                <Arrow dir="left" />
                <HThumb>
                  <svg width="9" height="7" viewBox="0 0 9 7" aria-hidden="true"><path d="M1.500 0v7M4.500 0v7M7.500 0v7" stroke="#555" /></svg>
                </HThumb>
                <Arrow dir="right" />
              </HScroll>
            </ClientInner>
          </Client>
        </Dialog>
      </Page>
    </>
  );
}
